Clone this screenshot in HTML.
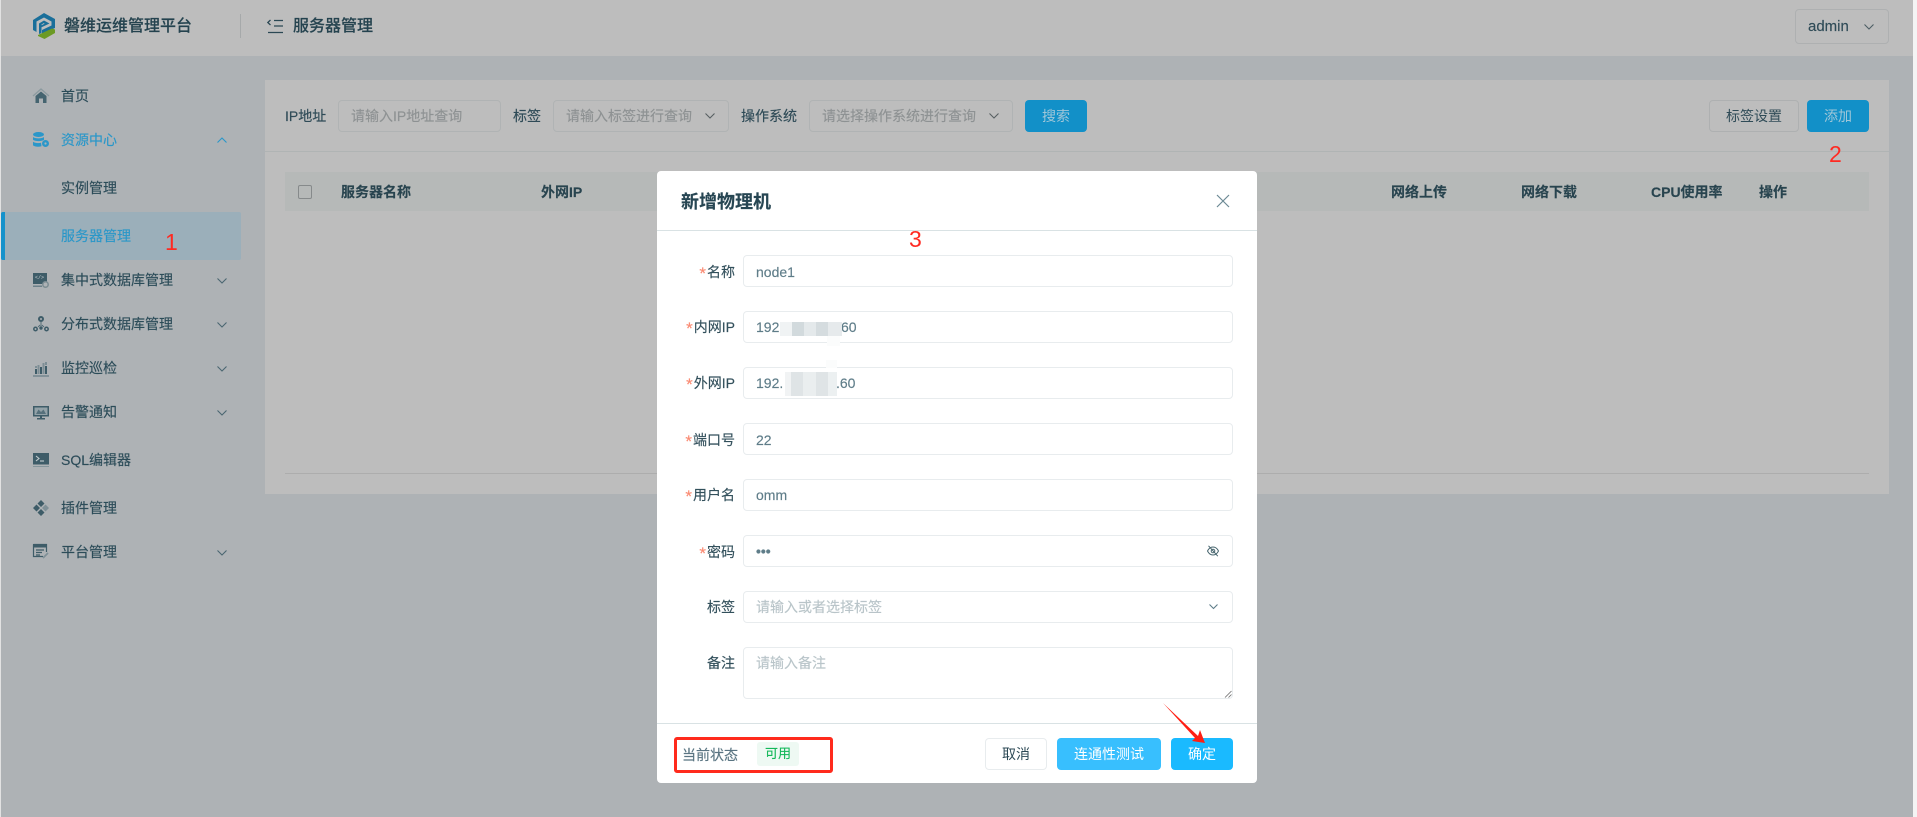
<!DOCTYPE html>
<html lang="zh-CN"><head><meta charset="utf-8"><title>服务器管理</title>
<style>
*{box-sizing:border-box}
html,body{margin:0;padding:0;width:1917px;height:817px;overflow:hidden;background:#f4f4f4}
body{font-family:"Liberation Sans","Noto Sans CJK SC",sans-serif;font-size:14px;color:#2c4955;position:relative}
div,span.a,svg{position:absolute}
.t{height:20px;line-height:20px;white-space:nowrap;-webkit-text-stroke:.15px currentColor}
.m{left:61px;color:#2c4c59}
.side-i{left:33px;width:16px;height:16px;overflow:visible}
.chev{width:10px;height:6px;overflow:visible}
.inp0{height:32px;border:1px solid #b0b3b4;border-radius:4px}
.ph0{color:#8e9293}
.th{font-weight:700;color:#28444f}
.lab{right:1182px;text-align:right;color:#33505c}
.lab b{font-weight:400;color:#fa8a72;margin-right:1px;font-size:17px;line-height:14px;vertical-align:-2px;font-family:"Liberation Sans",sans-serif}
.inp{left:743px;width:490px;height:32px;border:1px solid #e8ecee;border-radius:4px;background:#fff}
.v{left:756px;color:#5f7d89}
.ph{left:756px;color:#b9c5c9}
.btn{height:32px;line-height:32px;text-align:center;border-radius:4px}
</style></head><body>

<div style="left:1px;top:0;width:1912px;height:817px;background:#aeb2b5"></div>
<div style="left:0;top:0;width:1px;height:817px;background:#e2e2e2"></div>

<!-- header -->
<div style="left:1px;top:0;width:1912px;height:56px;background:#bdbdbd"></div>
<svg style="left:33px;top:13px" width="23" height="26" viewBox="0 0 23 26">
<path d="M0 7 L11 0 L22 6 L22 15 L9 21 L9 17 L18.500 12.500 L18.500 8.500 L11 4.500 L3.500 8.500 L3.500 19 L0 17Z" fill="#1a6f9a"/>
<path d="M6 10.500 L11 7.500 L16.500 10.500 L8 14.500 L8 12.500 L11.500 10.800 L11 10 L8.500 11.500 L8.500 20 L6 21Z" fill="#1a6f9a"/>
<path d="M5 22 L19 15.500 L22 16.500 L22 20 L11.500 26 L5 23Z" fill="#6c9a24"/>
</svg>
<div class="t" style="left:64px;top:17px;font-size:16px;font-weight:500;color:#25434f">磐维运维管理平台</div>
<div style="left:240px;top:14px;width:1px;height:24px;background:#a6a9aa"></div>
<svg style="left:267px;top:19px" width="17" height="15" viewBox="0 0 17 15" fill="none" stroke="#2b4854" stroke-width="1.300"><path d="M3.500 1 L0.800 3.500 L3.500 6"/><path d="M7 1.500H16M7 7H16M1 13.500H16"/></svg>
<div class="t" style="left:293px;top:17px;font-size:16px;font-weight:500;color:#25434f">服务器管理</div>
<div style="left:1795px;top:9px;width:94px;height:35px;border:1px solid #aeb0b1;border-radius:4px"></div>
<div class="t" style="left:1808px;top:17px;font-size:15px;color:#2f4b57">admin</div>
<svg class="chev" style="left:1864px;top:24px" viewBox="0 0 10 6" fill="none" stroke="#4d5d64" stroke-width="1.100"><path d="M.5 .5L5 5L9.500 .5"/></svg>

<!-- sidebar -->
<svg class="side-i" style="top:88px" viewBox="0 0 16 16"><path d="M0 8L8 1L16 8" fill="none" stroke="#8b9a9f" stroke-width="1.300"/><path d="M2.500 8L8 3.500L13.500 8V15H10V10.500H6V15H2.500Z" fill="#456470"/></svg>
<div class="t m" style="top:86px">首页</div>

<svg class="side-i" style="top:132px" viewBox="0 0 16 16" fill="#2b97c9"><ellipse cx="5.500" cy="2.500" rx="5.500" ry="2.500"/><path d="M0 5c2 1.800 9 1.800 11 0v2.800c-2 1.800-9 1.800-11 0zM0 9.800c2 1.500 6 1.500 8 1l.5 3.400c-3 1-7 .5-8.500-.8z"/><circle cx="12.500" cy="11.500" r="3.500"/><circle cx="12.500" cy="11.500" r="1.100" fill="#aeb2b5"/></svg>
<div class="t" style="left:61px;top:130px;color:#2a97c9">资源中心</div>
<svg class="chev" style="left:217px;top:137px" viewBox="0 0 10 6" fill="none" stroke="#2a97c9" stroke-width="1.100"><path d="M.5 5.500L5 1L9.500 5.500"/></svg>

<div class="t m" style="top:178px">实例管理</div>

<div style="left:1px;top:212px;width:240px;height:48px;background:#9bafba;border-radius:0 2px 2px 0"></div>
<div style="left:1px;top:212px;width:4px;height:48px;background:#1592cb;border-radius:2px 0 0 2px"></div>
<div class="t" style="left:61px;top:226px;color:#2a97c9">服务器管理</div>
<div class="a t" style="left:165px;top:232px;height:20px;line-height:20px;font-size:23px;color:#ff2a22;-webkit-text-stroke:0">1</div>

<svg class="side-i" style="top:273px" viewBox="0 0 16 16"><path d="M0 0H14V9A4 4 0 0 0 10 11H0Z" fill="#3e5c68"/><path d="M0 12.500H9V14H0Z" fill="#6c8089"/><circle cx="12.500" cy="11.500" r="2.700" fill="none" stroke="#7c8c92" stroke-width="1.500"/><text x="2" y="6" font-size="5" fill="#c5cccf" font-family="Liberation Mono">&lt;/&gt;</text></svg>
<div class="t m" style="top:270px">集中式数据库管理</div>
<svg class="chev" style="left:217px;top:278px" viewBox="0 0 10 6" fill="none" stroke="#4a6670" stroke-width="1.100"><path d="M.5 .5L5 5L9.500 .5"/></svg>

<svg class="side-i" style="top:316px" viewBox="0 0 16 16" fill="none" stroke="#3e5c68"><circle cx="8" cy="3" r="2" stroke-width="2"/><circle cx="2.500" cy="13" r="1.700" stroke-width="1.500"/><circle cx="13.500" cy="13" r="1.700" stroke-width="1.500"/><circle cx="8" cy="12" r="1.200" fill="#3e5c68"/><path d="M8 6V10M5 11L7 9M11 11L9 9" stroke-width=".8"/></svg>
<div class="t m" style="top:314px">分布式数据库管理</div>
<svg class="chev" style="left:217px;top:322px" viewBox="0 0 10 6" fill="none" stroke="#4a6670" stroke-width="1.100"><path d="M.5 .5L5 5L9.500 .5"/></svg>

<svg class="side-i" style="top:361px" viewBox="0 0 16 16"><path d="M2 8H4V13H2ZM7 6H9V13H7ZM12 5H14V13H12Z" fill="#3e5c68"/><path d="M4.500 4H6.500V13H4.500ZM9.500 2H11.500V13H9.500ZM2 5H4V7H2ZM12 1H14V4H12Z" fill="#7d8e95"/><path d="M0 14.500H16V15.500H0Z" fill="#56707b"/></svg>
<div class="t m" style="top:358px">监控巡检</div>
<svg class="chev" style="left:217px;top:366px" viewBox="0 0 10 6" fill="none" stroke="#4a6670" stroke-width="1.100"><path d="M.5 .5L5 5L9.500 .5"/></svg>

<svg class="side-i" style="top:405px" viewBox="0 0 16 14"><path d="M0 0H16V10.500H0Z" fill="#3e5c68"/><path d="M1.500 1.500H14.500V9H1.500Z" fill="#93a2a8"/><path d="M3 8L5.500 3.500L8 6L10.500 3.500L13 8Z" fill="#56707b"/><path d="M7 10.500H9V12H12V13.500H4V12H7Z" fill="#3e5c68"/></svg>
<div class="t m" style="top:402px">告警通知</div>
<svg class="chev" style="left:217px;top:410px" viewBox="0 0 10 6" fill="none" stroke="#4a6670" stroke-width="1.100"><path d="M.5 .5L5 5L9.500 .5"/></svg>

<svg class="side-i" style="top:452px" viewBox="0 0 16 16"><path d="M0 1H16V12.500H0Z" fill="#3e5c68"/><path d="M3 4L6 6.500L3 9" fill="none" stroke="#c2cbce" stroke-width="1.100"/><path d="M7 9H11" stroke="#c2cbce" stroke-width="1.100"/><path d="M0 14H16V15H0Z" fill="#84959b"/></svg>
<div class="t" style="left:61px;top:450px;color:#2c4c59;font-size:14px">SQL编辑器</div>

<svg class="side-i" style="top:500px" viewBox="0 0 16 16"><path d="M8 0L11.500 3.500L8 7L4.500 3.500ZM3.500 4.500L7 8L3.500 11.500L0 8ZM8 9L11.500 12.500L8 16L4.500 12.500Z" fill="#3e5c68"/><path d="M12.500 4.500L16 8L12.500 11.500L9 8Z" fill="#7f9097"/></svg>
<div class="t m" style="top:498px">插件管理</div>

<svg class="side-i" style="top:544px" viewBox="0 0 16 16"><path d="M.5 .5H13.500V8M10 12.500H.5V.5" fill="none" stroke="#3e5c68" stroke-width="1.200"/><path d="M0 0H14V3.500H0Z" fill="#3e5c68"/><path d="M3 6H11M3 8.500H9M3 11H7" stroke="#3e5c68" stroke-width="1.200"/><path d="M10 14L15 9" stroke="#7f9097" stroke-width="1.700"/></svg>
<div class="t m" style="top:542px">平台管理</div>
<svg class="chev" style="left:217px;top:550px" viewBox="0 0 10 6" fill="none" stroke="#4a6670" stroke-width="1.100"><path d="M.5 .5L5 5L9.500 .5"/></svg>

<!-- card -->
<div style="left:265px;top:80px;width:1624px;height:414px;background:#bdbdbd"></div>
<div style="left:265px;top:151px;width:1624px;height:1px;background:#b0b4b4"></div>
<div class="t" style="left:285px;top:106px;color:#2f4b57">IP地址</div>
<div class="inp0" style="left:338px;top:100px;width:163px"></div>
<div class="t ph0" style="left:351px;top:106px">请输入IP地址查询</div>
<div class="t" style="left:513px;top:106px;color:#2f4b57">标签</div>
<div class="inp0" style="left:553px;top:100px;width:176px"></div>
<div class="t ph0" style="left:566px;top:106px">请输入标签进行查询</div>
<svg class="chev" style="left:705px;top:113px" viewBox="0 0 10 6" fill="none" stroke="#575f62" stroke-width="1.100"><path d="M.5 .5L5 5L9.500 .5"/></svg>
<div class="t" style="left:741px;top:106px;color:#2f4b57">操作系统</div>
<div class="inp0" style="left:809px;top:100px;width:204px"></div>
<div class="t ph0" style="left:822px;top:106px">请选择操作系统进行查询</div>
<svg class="chev" style="left:989px;top:113px" viewBox="0 0 10 6" fill="none" stroke="#575f62" stroke-width="1.100"><path d="M.5 .5L5 5L9.500 .5"/></svg>
<div class="btn" style="left:1025px;top:100px;width:62px;background:#1290c8;color:#9fc6d8">搜索</div>
<div class="btn" style="left:1709px;top:100px;width:90px;border:1px solid #aeb0b1;line-height:30px;color:#2f4b57">标签设置</div>
<div class="btn" style="left:1807px;top:100px;width:62px;background:#1290c8;color:#9fc6d8">添加</div>
<div class="a t" style="left:1829px;top:144px;font-size:23px;color:#ff2a22;-webkit-text-stroke:0">2</div>

<div style="left:285px;top:172px;width:1584px;height:39px;background:#b6b9b8"></div>
<div style="left:298px;top:185px;width:14px;height:14px;border:1px solid #868a8b;border-radius:2px"></div>
<div class="t th" style="left:341px;top:182px">服务器名称</div>
<div class="t th" style="left:541px;top:182px">外网IP</div>
<div class="t th" style="left:1391px;top:182px">网络上传</div>
<div class="t th" style="left:1521px;top:182px">网络下载</div>
<div class="t th" style="left:1651px;top:182px">CPU使用率</div>
<div class="t th" style="left:1759px;top:182px">操作</div>
<div style="left:285px;top:473px;width:1584px;height:1px;background:#adadad"></div>

<!-- dialog -->
<div style="left:657px;top:171px;width:600px;height:612px;background:#fff;border-radius:4px"></div>
<div class="t" style="left:681px;top:190px;font-size:18px;font-weight:700;color:#274653;height:24px;line-height:24px">新增物理机</div>
<svg style="left:1216px;top:194px" width="14" height="14" viewBox="0 0 14 14" fill="none" stroke="#6c8a95" stroke-width="1.200"><path d="M1 1L13 13M13 1L1 13"/></svg>
<div style="left:657px;top:230px;width:600px;height:1px;background:#d9e2e4"></div>
<div class="a t" style="left:909px;top:229px;font-size:23px;color:#ff2a22;-webkit-text-stroke:0">3</div>

<div class="t lab" style="top:262px"><b>*</b>名称</div>
<div class="inp" style="top:255px"></div>
<div class="t v" style="top:262px">node1</div>

<div class="t lab" style="top:317px"><b>*</b>内网IP</div>
<div class="inp" style="top:311px"></div>
<div class="t v" style="top:317px">192</div>
<div class="t v" style="left:841px;top:317px">60</div>
<div style="left:780px;top:322px;width:12px;height:14px;background:#f0f3f4"></div>
<div style="left:792px;top:322px;width:12px;height:14px;background:#d2dadd"></div>
<div style="left:804px;top:322px;width:12px;height:14px;background:#e4e9eb"></div>
<div style="left:816px;top:322px;width:12px;height:14px;background:#d5dcdf"></div>
<div style="left:828px;top:322px;width:14px;height:14px;background:#e6eaec"></div>
<div style="left:827px;top:336px;width:13px;height:10px;background:#fbfcfc"></div>

<div class="t lab" style="top:373px"><b>*</b>外网IP</div>
<div class="inp" style="top:367px"></div>
<div class="t v" style="top:373px">192.</div>
<div class="t v" style="left:836px;top:373px">.60</div>
<div style="left:826px;top:360px;width:11px;height:8px;background:#fbfcfc"></div>
<div style="left:785px;top:372px;width:6px;height:24px;background:#f1f3f4"></div>
<div style="left:791px;top:372px;width:12px;height:24px;background:#dfe4e6"></div>
<div style="left:803px;top:372px;width:13px;height:24px;background:#eaeeef"></div>
<div style="left:816px;top:372px;width:12px;height:24px;background:#dfe4e6"></div>
<div style="left:828px;top:372px;width:9px;height:24px;background:#ecf0f1"></div>

<div class="t lab" style="top:430px"><b>*</b>端口号</div>
<div class="inp" style="top:423px"></div>
<div class="t v" style="top:430px">22</div>

<div class="t lab" style="top:485px"><b>*</b>用户名</div>
<div class="inp" style="top:479px"></div>
<div class="t v" style="top:485px">omm</div>

<div class="t lab" style="top:542px"><b>*</b>密码</div>
<div class="inp" style="top:535px"></div>
<div class="t v" style="top:541px;font-weight:700">•••</div>
<svg style="left:1207px;top:545px" width="12" height="12" viewBox="0 0 12 12" fill="none" stroke="#48666f" stroke-width="1"><path d="M.5 6C2 3 4 2 6 2S10 3 11.500 6C10 9 8 10 6 10S2 9 .5 6Z"/><circle cx="6" cy="6" r="1.800"/><path d="M1.500 .8L10.800 11.200"/></svg>

<div class="t lab" style="top:597px">标签</div>
<div class="inp" style="top:591px"></div>
<div class="t ph" style="top:597px">请输入或者选择标签</div>
<svg style="left:1209px;top:604px" width="9" height="6" viewBox="0 0 9 6" fill="none" stroke="#5f7d89" stroke-width="1.100"><path d="M.5 .5L4.500 4.500L8.500 .5"/></svg>

<div class="t lab" style="top:653px">备注</div>
<div class="inp" style="top:647px;height:52px"></div>
<div class="t ph" style="top:653px">请输入备注</div>
<svg style="left:1224px;top:690px" width="8" height="8" viewBox="0 0 8 8" fill="none" stroke="#6d6d6d" stroke-width=".8"><path d="M1 7.500L7.500 1M4.500 7.500L7.500 4.500"/></svg>

<div style="left:657px;top:723px;width:600px;height:1px;background:#d9e2e4"></div>

<div style="left:674px;top:737px;width:159px;height:36px;border:3px solid #ff2a1c;border-radius:3px"></div>
<div class="t" style="left:682px;top:745px;color:#5a7582">当前状态</div>
<div style="left:757px;top:742px;width:42px;height:24px;background:#eef9f3;border-radius:3px"></div>
<div class="t" style="left:757px;top:744px;width:42px;text-align:center;font-size:13px;color:#14b85a">可用</div>

<div class="btn" style="left:985px;top:738px;width:62px;border:1px solid #e8ecee;line-height:30px;color:#2c4955">取消</div>
<div class="btn" style="left:1057px;top:738px;width:104px;background:#38bffe;color:#fff">连通性测试</div>
<div class="btn" style="left:1171px;top:738px;width:62px;background:#1abaff;color:#fff">确定</div>

<svg style="left:1160px;top:700px" width="50" height="48" viewBox="1160 700 50 48"><polygon points="1163,703 1198,736 1200,730 1205,743 1192,741 1195,738" fill="#ff1f14"/></svg>

</body></html>
